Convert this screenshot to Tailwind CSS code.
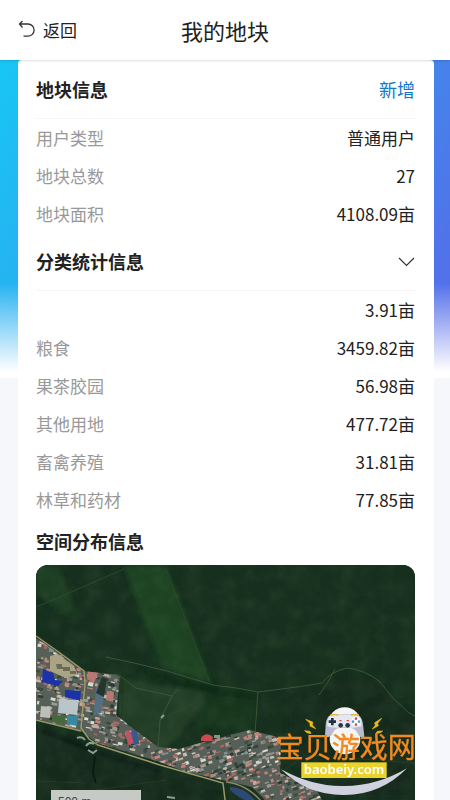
<!DOCTYPE html>
<html lang="zh-CN">
<head>
    <meta charset="UTF-8">
    <meta name="viewport" content="width=device-width, initial-scale=1.0">
    <title>我的地块</title>
    <script src="https://cdn.jsdelivr.net/npm/@tailwindcss/browser@4"></script>
</head>
<body class="relative flex flex-col h-screen overflow-hidden bg-[#f6f7fa] font-['Noto_Sans_CJK_SC',sans-serif] text-[#222222]">

    <header class="relative z-10 grid grid-cols-3 items-center h-[60px] shrink-0 px-4 bg-white shadow-sm">
        <button type="button" class="flex items-center gap-[5px] text-[17px] leading-6">
            <svg class="w-[22px] h-[22px]" viewBox="0 0 22 22" fill="none" stroke="#333333" stroke-width="1.3">
                <path d="M6.500 2 3.500 5 6.500 8.500M3.500 5H12a6 6 0 0 1 0 12.200H7.500"/>
            </svg>
            返回
        </button>
        <h1 class="text-[22px] leading-8 text-center">我的地块</h1>
    </header>

    <main class="relative flex-1 min-h-0 overflow-hidden pl-[18px] pr-4">
        <!-- page backdrop -->
        <div class="absolute inset-x-0 top-0 h-[318px] bg-linear-[118deg,#18c6f4,#5868e8]">
            <div class="h-full bg-linear-[180deg,transparent_70%,white_98%]"></div>
        </div>

        <div class="relative bg-white rounded-t-sm pl-[18px] pr-[19px] pb-5">
            <section>
                <div class="flex items-center justify-between h-[59px] border-b border-[#f5f5f5] text-[18px]">
                    <h2 class="font-bold">地块信息</h2>
                    <a href="#" class="text-[#1079cb]">新增</a>
                </div>
                <dl class="text-[17px]">
                    <div class="flex items-center justify-between h-[38px]"><dt class="text-[#999999]">用户类型</dt><dd>普通用户</dd></div>
                    <div class="flex items-center justify-between h-[38px]"><dt class="text-[#999999]">地块总数</dt><dd>27</dd></div>
                    <div class="flex items-center justify-between h-[38px]"><dt class="text-[#999999]">地块面积</dt><dd>4108.09亩</dd></div>
                </dl>
            </section>

            <section>
                <div class="flex items-center justify-between h-[58px] border-b border-[#f5f5f5] text-[18px]">
                    <h2 class="font-bold">分类统计信息</h2>
                    <button type="button" aria-label="收起">
                        <svg class="w-[17px] h-[10px]" viewBox="0 0 17 10" fill="none" stroke="#333333" stroke-width="1.2"><path d="m1 1 7.500 7.500L16 1"/></svg>
                    </button>
                </div>
                <dl class="text-[17px]">
                    <div class="flex items-center justify-between h-[38px]"><dt></dt><dd>3.91亩</dd></div>
                    <div class="flex items-center justify-between h-[38px]"><dt class="text-[#999999]">粮食</dt><dd>3459.82亩</dd></div>
                    <div class="flex items-center justify-between h-[38px]"><dt class="text-[#999999]">果茶胶园</dt><dd>56.98亩</dd></div>
                    <div class="flex items-center justify-between h-[38px]"><dt class="text-[#999999]">其他用地</dt><dd>477.72亩</dd></div>
                    <div class="flex items-center justify-between h-[38px]"><dt class="text-[#999999]">畜禽养殖</dt><dd>31.81亩</dd></div>
                    <div class="flex items-center justify-between h-[38px]"><dt class="text-[#999999]">林草和药材</dt><dd>77.85亩</dd></div>
                </dl>
            </section>

            <section>
                <h2 class="h-[46px] text-[18px] leading-[44px] font-bold">空间分布信息</h2>
                <div class="relative h-[260px] rounded-xl overflow-hidden bg-[#162f1e]">
                    <svg class="w-full h-full" viewBox="0 0 379 260" preserveAspectRatio="xMinYMin slice">
                        <defs>
                            <filter id="soft"><feGaussianBlur stdDeviation="0.5"/></filter>
                            <filter id="haze"><feGaussianBlur stdDeviation="2"/></filter>
                            <filter id="grain" x="0" y="0" width="100%" height="100%">
                                <feTurbulence type="fractalNoise" baseFrequency="0.06" numOctaves="4" seed="4"/>
                                <feColorMatrix values="0 0 0 0 0.14  0 0 0 0 0.27  0 0 0 0 0.12  1.2 0 0 0 -0.4"/>
                            </filter>
                            <clipPath id="town">
                                <path d="M0 73 24 89 47 106 84 110 80 150 99 165 122 182 143 184 164 178 194 170 214 165 245 173 244 208 281 226 300 260H236L228 234 216 222 191 216 150 207 124 197 61 178 44 165 0 154Z"/>
                            </clipPath>
                        </defs>
                        <rect width="379" height="260" fill="#162f1e"/>
                        <!-- fields -->
                        <g filter="url(#haze)">
                            <path d="M0 0H22L38 40 30 52 0 28Z" fill="#1d3c22"/>
                            <path d="M87 0H130L176 119 127 103Z" fill="#1d4222"/>
                            <path d="M86 112 124 122 178 124 164 145 120 195 84 160Z" fill="#203e26"/>
                            <path d="M92 102 178 121 222 129 218 138 140 121Z" fill="#102919"/>
                            <path d="M170 130 220 135 216 168 160 160Z" fill="#17351f"/>
                            <path d="M0 160 60 182 130 206 190 222V260H0Z" fill="#122b1d"/>
                            <path d="M306 108 344 118 379 155V235H284L250 190 252 124 286 120Z" fill="#142b1a"/>
                            <path d="M6 165 60 186 124 206" stroke="#0a1c14" stroke-width="5" fill="none"/>
                        </g>
                        <rect width="379" height="260" filter="url(#grain)" opacity="0.2"/>
                        <!-- paths between fields -->
                        <g fill="none" stroke="#40603c" stroke-width="0.8" filter="url(#soft)">
                            <path d="M0 42Q40 25 88 4" opacity="0.6"/>
                            <path d="M70 92 98 98 131 106 177 120 200 123 222 127 261 122 286 118Q294 107 311 103 330 105 344 117L357 133 373 148 379 151"/>
                            <path d="M222 127 219 168M84 111 100 123 136 131 142 124M136 131 124 155 122 182M299 104 292 117 283 130"/>
                            <path d="M84 110 84 150M130 4 174 118" opacity="0.5"/>
                            <path d="M0 216 50 218M60 225 130 215M124 155 160 138M244 208 270 190 379 198" opacity="0.35"/>
                        </g>
                        <g filter="url(#soft)">
                            <g clip-path="url(#town)">
                                <rect width="379" height="260" fill="#566058"/>
                                <g id="buildings"></g>
                                <path d="M14 91 22 89 38 101 42 110 30 113 14 106Z" fill="#aaa486"/>
                                <path d="M20 99h6v3h8v4h-7v-2h-6ZM34 106h6v3h-6Z" fill="#6d6b59"/>
                                <path d="M7 104 17 108 19 115 27 116 22 121 6 117ZM29 125 45 126 44 136 29 132Z" fill="#1c30a8"/>
                                <path d="M23 134 43 135 41 150 22 148Z" fill="#bac5c8"/>
                                <path d="M31 150 42 151 41 161 31 159Z" fill="#3489a5"/>
                                <path d="M16 150 29 151 29 158 16 157Z" fill="#456a37"/>
                                <path d="M5 141 15 142 14 153 4 152Z" fill="#bcc0b8"/>
                                <path d="M52 106 62 108 58 118 51 114ZM71 126 78 127 77 137 70 135Z" fill="#b67871"/>
                                <path d="M60 122 67 120 68 130 65 148 58 150Z" fill="#526f83"/>
                                <path d="M66 112 71 114 68 132 60 128Z" fill="#26342e"/>
                                <path d="M89 166 94 165 98 178 92 180Z" fill="#bd5264"/>
                                <path d="M95 165 101 166 103 179 98 180Z" fill="#385a93"/>
                            </g>
                            <path d="M0 71 24 88 48 106 49 118 45 163 53 174 62 180 124 200 187 218 192 260M0 155 45 166" fill="none" stroke="#9a9968" stroke-width="1.500"/>
                            <path d="M190 217Q210 219 225 236L238 260" fill="none" stroke="#8c8765" stroke-width="1.500"/>
                            <path d="M194 222Q208 222 218 234L221 238Q205 236 194 225Z" fill="#2d4a73"/>
                            <path d="M165 173Q170 166 177 172L176 176 165 176Z" fill="#cb4950"/>
                            <path d="M178 170h6v3h-6Z" fill="#7b9b8b"/>
                            <g fill="none" stroke="#8da08f" stroke-width="2">
                                <path d="M41 173q5-2 8 2M50 181q3-5 8-2M52 185l5 3 4-3M125 153l3-3M131 232l8 1"/>
                            </g>
                            <path d="M59 191 57 208 60 218" stroke="#091811" stroke-width="1.500" fill="none"/>
                        </g>
                    </svg>
                    <!-- scale bar -->
                    <div class="absolute left-[15px] top-[225px] w-[90px] h-6 pl-[7px] bg-[#c5cbc4] font-['Liberation_Sans',sans-serif] text-[12px] leading-6 text-[#444444]">500 m</div>
                </div>
            </section>
        </div>
    </main>

    <svg class="absolute z-20 right-[33px] bottom-[3px] w-[142px] h-[92px]" viewBox="45 30 426 276" role="img" aria-label="宝贝游戏网">
        <circle cx="254" cy="87" r="50" fill="#f4f5f4"/>
        <circle cx="255" cy="132" r="46" fill="#f4f5f4"/>
        <path d="M211 61Q252 53 294 61 308 66 310 96L313 125Q300 133 291 112 285 101 273 99H236Q223 101 217 117 209 132 195 124L197 88Q200 65 211 61Z" fill="#b9bccf"/>
        <path d="M211 62Q252 55 294 62 308 72 304 94 282 101 253 96 222 101 202 94 200 70 211 62Z" fill="#e7e8ef"/>
        <path d="M211 61q10-5 24 0M273 61q10-5 23 0" fill="none" stroke="#e7b83f" stroke-width="5"/>
        <path d="M217 69v22M206 80h22" stroke="#203145" stroke-width="8"/>
        <circle cx="242" cy="91" r="7" fill="#26364a"/><circle cx="263" cy="91" r="7" fill="#26364a"/>
        <circle cx="288" cy="80" r="14" fill="#ffffff"/>
        <circle cx="288" cy="71" r="4" fill="#d34d5c"/><circle cx="288" cy="89" r="4" fill="#d34d5c"/>
        <circle cx="279" cy="80" r="4" fill="#4b9fc7"/><circle cx="297" cy="80" r="4" fill="#4b9fc7"/>
        <path d="M238 77h7M260 77h7" stroke="#d34d5c" stroke-width="4"/>
        <path d="M137 73 158 81 157 90 167 101 150 93 150 85ZM134 107 150 109 153 116 141 113ZM365 70 344 83 346 91 337 102 355 92 353 85ZM368 108 352 109 347 116 361 113Z" fill="#efba1e" stroke="#efba1e" stroke-width="2"/>
        <path d="M63 223Q160 276 254 273 350 273 441 220 363 300 254 300 142 302 63 223Z" fill="#cfd1de"/>
        <rect x="124" y="202" width="256" height="47" fill="#ead32b"/>
        <text x="252" y="237" text-anchor="middle" class="font-['Noto_Sans',sans-serif] text-[39px] font-semibold" fill="#ffffff">baobeiy.com</text>
        <text x="47" y="190" class="font-['Noto_Sans_CJK_SC',sans-serif] text-[84px] font-normal" fill="#f18a20" stroke="#f18a20" stroke-width="1">宝贝游戏网</text>
    </svg>

    <script>
        // fill the built-up area with small roofs, same layout on every load
        let seed = 17;
        function random() {
            seed = (seed * 16807) % 2147483647;
            return seed / 2147483647;
        }

        const roofs = ["#c4bbb0", "#9d9a90", "#bd857c", "#84918e", "#dad9cf", "#3c4c43", "#2c3b33", "#ab6964", "#c9a79c", "#334639"];
        const group = document.getElementById("buildings");
        for (let i = 0; i < 2600; i++) {
            const rect = document.createElementNS("http://www.w3.org/2000/svg", "rect");
            const x = random() * 300;
            const y = 70 + random() * 185;
            rect.setAttribute("x", x);
            rect.setAttribute("y", y);
            rect.setAttribute("width", 2 + random() * 4);
            rect.setAttribute("height", 1 + random() * 2.5);
            rect.setAttribute("fill", roofs[Math.floor(random() * roofs.length)]);
            rect.setAttribute("transform", `rotate(${x < 100 ? 12 : -18} ${x} ${y})`);
            group.appendChild(rect);
        }
    </script>

</body>
</html>
